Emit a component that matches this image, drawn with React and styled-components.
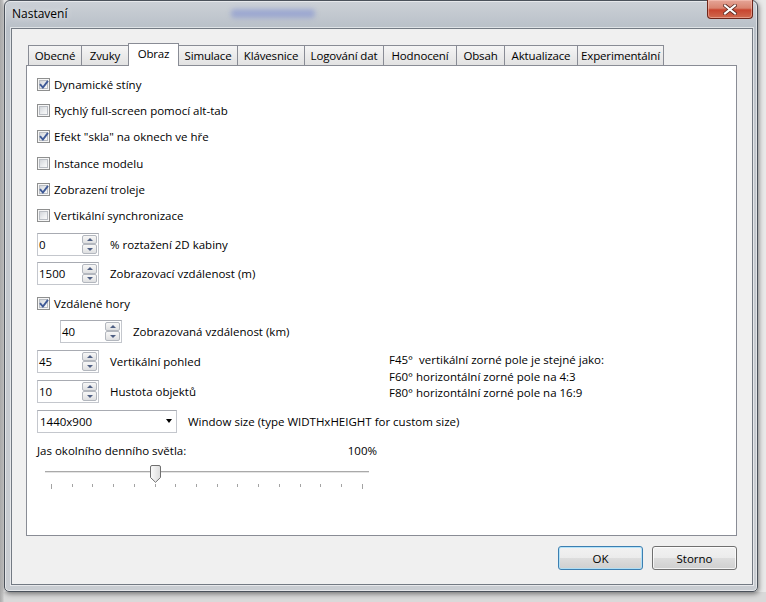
import React from 'react';
import styled, { createGlobalStyle } from 'styled-components';

const GlobalStyle = createGlobalStyle`
  html, body { margin: 0; padding: 0; }
  body {
    font-family: "Open Sans", "Noto Sans", sans-serif;
    font-size: 11.5px;
    color: #000;
    background: #e2e2e2;
  }
  * { box-sizing: border-box; }
`;

const Desktop = styled.div`
  width: 766px;
  height: 602px;
  overflow: hidden;
  padding-left: 4px;
  background:
    linear-gradient(to right, #a9a9a9 0, #c4c4c4 3px, transparent 4px),
    linear-gradient(to bottom, #e9e9e9 0, #e9e9e9 592px, #d9d9d9 592px);
`;

const Window = styled.div`
  width: 754px;
  height: 592px;
  border: 1px solid #4b525b;
  border-radius: 6px 6px 5px 5px;
  background: linear-gradient(180deg, #ccd1d7 0px, #b9c0c8 27px, #c2c7cd 140px, #c9cdd2 100%);
  box-shadow: 1px 2px 5px rgba(0, 0, 0, 0.45), inset 0 0 0 1px rgba(255, 255, 255, 0.5);
  display: flex;
  flex-direction: column;
`;

const TitleBar = styled.div`
  height: 27px;
  display: flex;
  align-items: flex-start;
  flex: none;
`;

const Title = styled.div`
  padding: 5px 0 0 7px;
  font-size: 12px;
  line-height: 16px;
  color: #000;
  text-shadow: 0 0 6px rgba(255, 255, 255, 0.9);
`;

const GlassSmear = styled.div`
  width: 84px;
  height: 9px;
  margin: 8px 0 0 163px;
  border-radius: 4px;
  background: rgba(95, 115, 210, 0.38);
  filter: blur(2.5px);
`;

const Spacer = styled.div`
  flex: 1;
`;

const CloseButton = styled.div`
  width: 46px;
  height: 19px;
  margin: -1px 4px 0 0;
  border: 1px solid #6e2519;
  border-top: none;
  border-radius: 0 0 4px 4px;
  background: linear-gradient(180deg, #e5a597 0%, #d98470 45%, #c8452f 55%, #cf6a4f 100%);
  box-shadow: inset 0 0 0 1px rgba(255, 210, 200, 0.45);
  display: flex;
  align-items: center;
  justify-content: center;
`;

const Client = styled.div`
  flex: 1;
  margin: 0 4px 6px 6px;
  border: 1px solid #737a83;
  box-shadow: 0 0 0 1px rgba(255, 255, 255, 0.55);
  background: #f0f0f0;
  padding: 14px 15px 14px 14px;
  display: flex;
  flex-direction: column;
`;

const TabControl = styled.div`
  flex: 1;
  display: flex;
  flex-direction: column;
`;

const TabStrip = styled.div`
  height: 22px;
  display: flex;
  padding-left: 2px;
  position: relative;
  z-index: 1;
  flex: none;
`;

const Tab = styled.div`
  width: ${(p) => p.$w}px;
  height: ${(p) => (p.$active ? '23px' : '20px')};
  margin-top: ${(p) => (p.$active ? '0' : '2px')};
  margin-left: ${(p) => (p.$first ? '0' : '-1px')};
  padding-bottom: ${(p) => (p.$active ? '3px' : '0')};
  border: 1px solid #898c95;
  border-bottom: none;
  background: ${(p) => (p.$active ? '#fff' : 'linear-gradient(180deg, #f5f5f5 0%, #ebebeb 50%, #e2e2e2 100%)')};
  position: relative;
  z-index: ${(p) => (p.$active ? 2 : 1)};
  display: flex;
  align-items: center;
  justify-content: center;
  white-space: nowrap;
  line-height: 14px;
  letter-spacing: -0.15px;
`;

const Panel = styled.div`
  flex: 1;
  border: 1px solid #898c95;
  background: #fff;
  padding: 6px 10px 0 10px;
  display: flex;
  flex-direction: column;
`;

const Row = styled.div`
  display: flex;
  align-items: center;
  height: 24px;
  flex: none;
  margin-top: ${(p) => p.$mt || 0}px;
  padding-left: ${(p) => p.$indent || 0}px;
  gap: ${(p) => p.$gap || 11}px;
  white-space: nowrap;
`;

const CheckBoxBox = styled.span`
  position: relative;
  width: 13px;
  height: 13px;
  flex: none;
  border: 1px solid #8e8f8f;
  background: #f6f6f6;
  &::before {
    content: '';
    position: absolute;
    inset: 1px;
    border: 1px solid #b9bdc3;
    background: linear-gradient(135deg, #d3d6da 0%, #eceef0 60%, #f9f9f9 100%);
  }
`;

const CheckMark = styled.svg`
  position: absolute;
  left: 1px;
  top: 1px;
`;

const CheckBox = ({ checked }) => (
  <CheckBoxBox>
    {checked && (
      <CheckMark width="10" height="10" viewBox="0 0 10 10">
        <path d="M1.6 4.9 L3.9 7.6 L8.4 1.6" fill="none" stroke="#3f5a97" strokeWidth="1.9" strokeLinecap="square" strokeLinejoin="miter" />
      </CheckMark>
    )}
  </CheckBoxBox>
);

const SpinBox = styled.div`
  width: 62px;
  height: 23px;
  flex: none;
  display: flex;
  background: #fff;
  border: 1px solid #c4c7cd;
  border-top-color: #a8abb2;
  padding: 1px 1px 1px 0;
`;

const SpinValue = styled.div`
  flex: 1;
  display: flex;
  align-items: center;
  padding-left: 1px;
`;

const SpinButtons = styled.div`
  width: 15px;
  display: flex;
  flex-direction: column;
`;

const SpinBtn = styled.div`
  flex: 1;
  border: 1px solid #b3b7be;
  border-radius: 2px;
  background: linear-gradient(180deg, #f7f7f7 0%, #ececec 50%, #dedfe1 100%);
  display: flex;
  align-items: center;
  justify-content: center;
`;

const Arrow = styled.span`
  width: 0;
  height: 0;
  border-left: 3px solid transparent;
  border-right: 3px solid transparent;
  ${(p) => (p.$up ? 'border-bottom: 3px solid #4e5f83;' : 'border-top: 3px solid #4e5f83;')}
`;

const Spinner = ({ value }) => (
  <SpinBox>
    <SpinValue>{value}</SpinValue>
    <SpinButtons>
      <SpinBtn>
        <Arrow $up />
      </SpinBtn>
      <SpinBtn>
        <Arrow />
      </SpinBtn>
    </SpinButtons>
  </SpinBox>
);

const Combo = styled.div`
  width: 140px;
  height: 23px;
  flex: none;
  display: flex;
  align-items: center;
  justify-content: space-between;
  padding: 0 4px 0 2px;
  background: #fff;
  border: 1px solid #c4c7cd;
  border-top-color: #a8abb2;
`;

const ComboArrow = styled.span`
  width: 0;
  height: 0;
  border-left: 3.5px solid transparent;
  border-right: 3.5px solid transparent;
  border-top: 4px solid #000;
`;

const FovSection = styled.div`
  display: flex;
  flex: none;
`;

const FovLeft = styled.div`
  width: 352px;
  display: flex;
  flex-direction: column;
`;

const FovNote = styled.div`
  padding-top: 3px;
  margin-top: 6px;
  line-height: 16.4px;
  white-space: pre;
`;

const LabelRow = styled.div`
  width: 340px;
  height: 24px;
  margin-top: ${(p) => p.$mt || 0}px;
  display: flex;
  align-items: center;
  justify-content: space-between;
  flex: none;
`;

const Slider = styled.div`
  position: relative;
  width: 324px;
  margin-left: 8px;
  display: flex;
  flex-direction: column;
  flex: none;
`;

const SliderTrack = styled.div`
  margin-top: 9px;
  height: 2px;
  border-top: 1px solid #a9a9a9;
  background: #e4e4e4;
`;

const Ticks = styled.div`
  margin-top: 11px;
  padding: 0 6px;
  display: flex;
  justify-content: space-between;
  align-items: flex-start;
`;

const Tick = styled.span`
  width: 1px;
  height: ${(p) => (p.$long ? 5 : 3)}px;
  background: #a3a3a3;
`;

const Thumb = styled.svg`
  position: absolute;
  top: 3px;
`;

const ButtonRow = styled.div`
  margin-top: 10px;
  display: flex;
  justify-content: flex-end;
  gap: 9px;
  flex: none;
`;

const Button = styled.button`
  width: 85px;
  height: 24px;
  font-family: inherit;
  font-size: 11.5px;
  color: #000;
  padding: 0;
  border-radius: 3px;
  border: 1px solid ${(p) => (p.$default ? '#3c7fb1' : '#707070')};
  background: linear-gradient(180deg, #f2f2f2 0%, #ebebeb 50%, #dddddd 51%, #cfcfcf 100%);
  box-shadow: inset 0 0 0 1px ${(p) => (p.$default ? 'rgba(170, 225, 250, 0.85)' : 'rgba(255, 255, 255, 0.75)')};
`;

const tabs = [
  ['Obecné', 54],
  ['Zvuky', 48],
  ['Obraz', 51],
  ['Simulace', 60],
  ['Klávesnice', 68],
  ['Logování dat', 80],
  ['Hodnocení', 74],
  ['Obsah', 49],
  ['Aktualizace', 74],
  ['Experimentální', 87],
];

const checks = [
  ['Dynamické stíny', true],
  ['Rychlý full-screen pomocí alt-tab', false],
  ['Efekt "skla" na oknech ve hře', true],
  ['Instance modelu', false],
  ['Zobrazení troleje', true],
  ['Vertikální synchronizace', false],
];

const TICKS = 16;
const SLIDER_VALUE = 5;

export default function App() {
  const step = (324 - 12 - 1) / (TICKS - 1);
  const thumbLeft = 6 + SLIDER_VALUE * step - 5;
  return (
    <Desktop>
      <GlobalStyle />
      <Window>
        <TitleBar>
          <Title>Nastavení</Title>
          <GlassSmear />
          <Spacer />
          <CloseButton>
            <svg width="14" height="11" viewBox="0 0 14 11">
              <path d="M2 1.5 L12 9.5 M12 1.5 L2 9.5" stroke="#5b2a22" strokeWidth="3.6" strokeLinecap="square" />
              <path d="M2 1.5 L12 9.5 M12 1.5 L2 9.5" stroke="#ffffff" strokeWidth="2" strokeLinecap="square" />
            </svg>
          </CloseButton>
        </TitleBar>
        <Client>
          <TabControl>
            <TabStrip>
              {tabs.map(([t, w], i) => (
                <Tab key={t} $w={w} $first={i === 0} $active={t === 'Obraz'}>
                  {t}
                </Tab>
              ))}
            </TabStrip>
            <Panel>
              {checks.map(([label, on], i) => (
                <Row key={label} $gap={4} $mt={i === 0 ? 0 : 2.4}>
                  <CheckBox checked={on} />
                  {label}
                </Row>
              ))}
              <Row $mt={4.5}>
                <Spinner value="0" />% roztažení 2D kabiny
              </Row>
              <Row $mt={5.2}>
                <Spinner value="1500" />Zobrazovací vzdálenost (m)
              </Row>
              <Row $mt={6} $gap={4}>
                <CheckBox checked />
                Vzdálené hory
              </Row>
              <Row $mt={3.8} $indent={23}>
                <Spinner value="40" />Zobrazovaná vzdálenost (km)
              </Row>
              <FovSection>
                <FovLeft>
                  <Row $mt={6}>
                    <Spinner value="45" />Vertikální pohled
                  </Row>
                  <Row $mt={6}>
                    <Spinner value="10" />Hustota objektů
                  </Row>
                </FovLeft>
                <FovNote>
                  {'F45°  vertikální zorné pole je stejné jako:\nF60° horizontální zorné pole na 4:3\nF80° horizontální zorné pole na 16:9'}
                </FovNote>
              </FovSection>
              <Row $mt={5.7}>
                <Combo>
                  1440x900
                  <ComboArrow />
                </Combo>
                Window size (type WIDTHxHEIGHT for custom size)
              </Row>
              <LabelRow $mt={5}>
                <span>Jas okolního denního světla:</span>
                <span>100%</span>
              </LabelRow>
              <Slider>
                <SliderTrack />
                <Ticks>
                  {Array.from({ length: TICKS }, (_, i) => (
                    <Tick key={i} $long={i === 0 || i === TICKS - 1} />
                  ))}
                </Ticks>
                <Thumb width="11" height="18" viewBox="0 0 11 18" style={{ left: thumbLeft }}>
                  <defs>
                    <linearGradient id="thumbGrad" x1="0" y1="0" x2="1" y2="0">
                      <stop offset="0" stopColor="#fbfbfb" />
                      <stop offset="1" stopColor="#dcdcdc" />
                    </linearGradient>
                  </defs>
                  <path d="M0.5 2 Q0.5 0.5 2 0.5 H9 Q10.5 0.5 10.5 2 V12.5 L5.5 17.3 L0.5 12.5 Z" fill="url(#thumbGrad)" stroke="#6f6f6f" />
                </Thumb>
              </Slider>
            </Panel>
          </TabControl>
          <ButtonRow>
            <Button $default>OK</Button>
            <Button>Storno</Button>
          </ButtonRow>
        </Client>
      </Window>
    </Desktop>
  );
}
